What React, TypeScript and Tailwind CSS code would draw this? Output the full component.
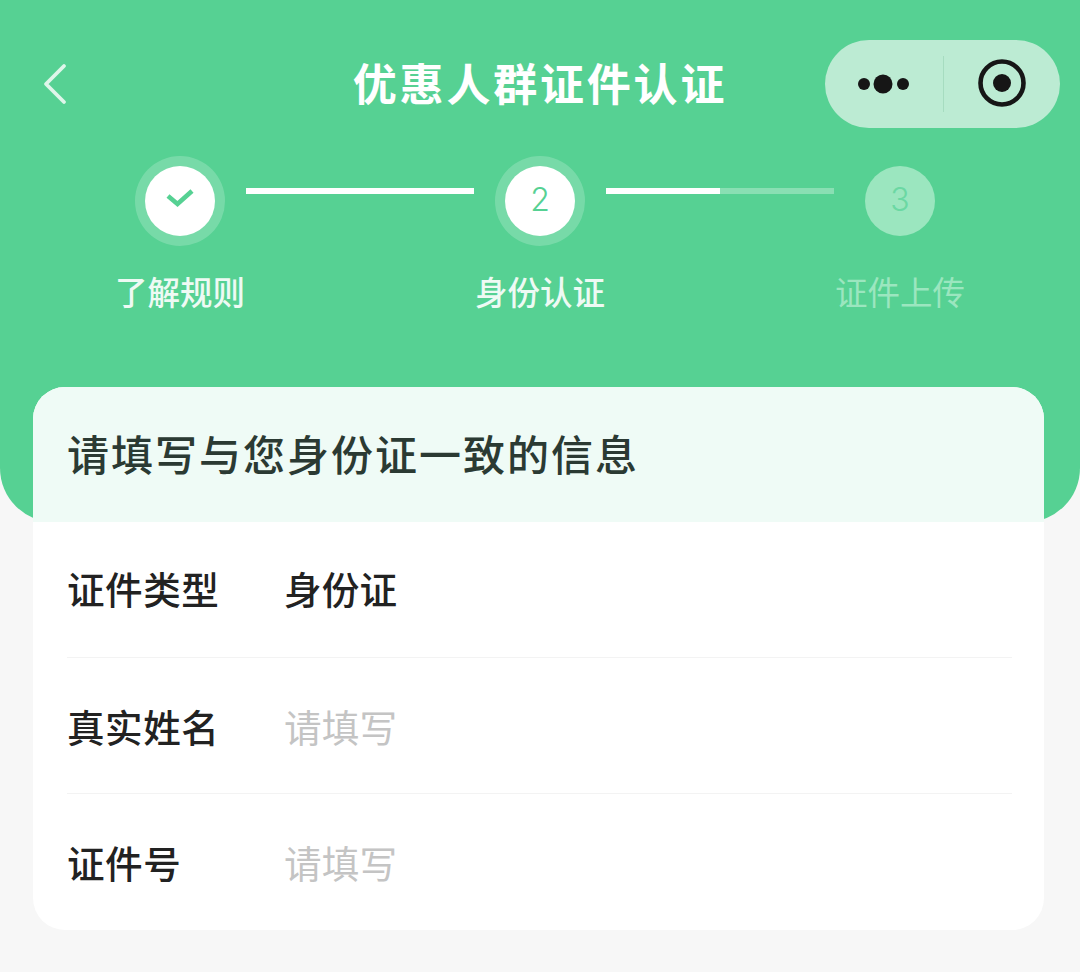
const font = { fontFamily: '"Noto Sans CJK SC", "Noto Sans", sans-serif' };

const Line = ({ half }: { half?: boolean }) => (
  <div className="mt-[32px] h-[6px] w-[228px] bg-white/30">
    <div className={`h-full bg-white ${half ? "w-1/2" : "w-full"}`} />
  </div>
);

const Row = ({ label, value, hint, last }: { label: string; value: string; hint?: boolean; last?: boolean }) => (
  <div className={`flex h-[136px] items-center ${hint ? "pt-[1px]" : "pb-[3px]"} ${last ? "" : "border-b border-[#f3f3f3]"}`}>
    <span className="w-[217px] text-[37.6px] font-medium tracking-[0.5px] text-[#222222]">{label}</span>
    <span className={`text-[37.6px] tracking-[0.2px] ${hint ? "text-[#c4c4c4]" : "font-medium text-[#222222]"}`}>{value}</span>
  </div>
);

export default function App() {
  return (
    <div className="h-[972px] w-[1080px] overflow-hidden bg-[#f7f7f7]" style={font}>
      <div className="h-[522px] rounded-b-[54px] bg-[#56d193] pt-[40px]">
        {/* nav bar */}
        <div className="flex h-[88px] items-center">
          <div className="w-[255px] pl-[39px]">
            <svg width="32" height="44" viewBox="0 0 32 44" fill="none">
              <path d="M25 4 L7 22 L25 40" stroke="#dff6ea" strokeWidth="3.8" strokeLinecap="round" strokeLinejoin="round" />
            </svg>
          </div>
          <div className="flex-1 pb-[5px] text-center text-[44px] font-bold tracking-[2.8px] text-white">优惠人群证件认证</div>
          <div className="flex w-[255px] justify-start">
            <div className="flex h-[88px] w-[235px] items-center rounded-full bg-[#bcebd3]">
              <div className="flex w-[118px] justify-center">
                <svg width="54" height="24" viewBox="0 0 54 24" fill="#161616" className="-mt-[1px]">
                  <circle cx="7" cy="12" r="6" />
                  <circle cx="26" cy="12" r="9.5" />
                  <circle cx="46" cy="12" r="6" />
                </svg>
              </div>
              <div className="h-[56px] w-px bg-[#a6dcc0]" />
              <div className="flex flex-1 justify-center">
                <svg width="48" height="48" viewBox="0 0 48 48" fill="none" className="-mt-[2px]">
                  <circle cx="24" cy="24" r="21.5" stroke="#161616" strokeWidth="4.6" />
                  <circle cx="24" cy="24" r="9" fill="#161616" />
                </svg>
              </div>
            </div>
          </div>
        </div>

        {/* steps */}
        <div className="mt-[28px] flex justify-center gap-[21px]">
          <div className="flex h-[90px] w-[90px] items-center justify-center rounded-full bg-white/20">
            <div className="flex h-[70px] w-[70px] items-center justify-center rounded-full bg-white">
              <svg width="28" height="22" viewBox="0 0 28 22" fill="none" className="-mt-[6px]">
                <path d="M2 9 L11.5 17 L26 4" stroke="#56d193" strokeWidth="4.6" />
              </svg>
            </div>
          </div>
          <Line />
          <div className="flex h-[90px] w-[90px] items-center justify-center rounded-full bg-white/20">
            <div className="flex h-[70px] w-[70px] items-center justify-center rounded-full bg-white pb-[3px] font-[Inter] text-[32px] font-light text-[#56d193]">2</div>
          </div>
          <Line half />
          <div className="flex h-[90px] w-[90px] items-center justify-center">
            <div className="flex h-[70px] w-[70px] items-center justify-center rounded-full bg-[#9be6bf] pb-[3px] font-[Inter] text-[32px] font-light text-[#6bd8a3]">3</div>
          </div>
        </div>
        <div className="mt-[21px] grid grid-cols-3 text-center text-[32.5px] leading-[48px]">
          <span className="font-medium text-[#eefaf4]">了解规则</span>
          <span className="font-medium text-[#eefaf4]">身份认证</span>
          <span className="text-[#9be6bf]">证件上传</span>
        </div>
      </div>

      {/* form card */}
      <div className="mx-[33px] -mt-[135px] w-[1011px] overflow-hidden rounded-[32px] bg-white">
        <div className="flex h-[135px] items-center bg-[#effbf6] pb-[5px] pl-[34px] pr-[32px] text-[42px] font-medium tracking-[2px] text-[#2b3a33]">
          请填写与您身份证一致的信息
        </div>
        <div className="pl-[34px] pr-[32px]">
          <Row label="证件类型" value="身份证" />
          <Row label="真实姓名" value="请填写" hint />
          <Row label="证件号" value="请填写" hint last />
        </div>
      </div>
    </div>
  );
}
